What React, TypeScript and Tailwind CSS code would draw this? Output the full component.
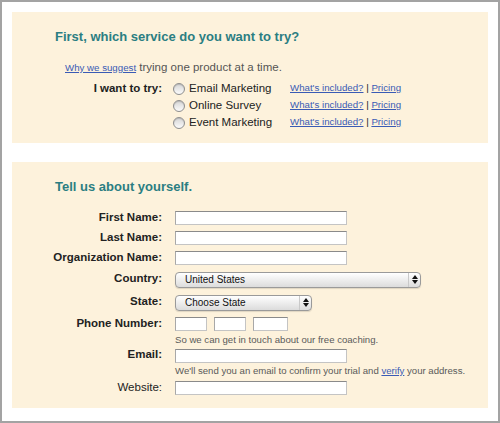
const font = { fontFamily: '"Liberation Sans", Arial, sans-serif' }

function Radio({ label }: { label: string }) {
  return (
    <div className="flex items-center w-[117px]">
      <span className="w-[12px] h-[12px] rounded-full border border-[#8e8e8e] bg-gradient-to-b from-[#d6d6d6] to-[#fbfbfb] shadow-[inset_0_1px_1px_rgba(0,0,0,0.15)]" />
      <span className="ml-[4px] text-[11.5px] text-[#222]">{label}</span>
    </div>
  )
}

function ServiceRow({ label, service }: { label?: string; service: string }) {
  return (
    <div className="flex items-center h-[17px]">
      <div className="w-[150px] text-right text-[11.5px] font-bold text-[#222]">{label}</div>
      <div className="ml-[11px]">
        <Radio label={service} />
      </div>
      <div className="text-[9.7px] text-[#222]">
        <a className="text-[#3a5bb5] underline">What's included?</a> |{" "}
        <a className="text-[#3a5bb5] underline">Pricing</a>
      </div>
    </div>
  )
}

function Field({
  label,
  bold = true,
  h = 20,
  children,
}: {
  label: string
  bold?: boolean
  h?: number
  children: React.ReactNode
}) {
  return (
    <div className="flex items-center" style={{ height: h }}>
      <div
        className={
          "w-[150px] text-right text-[11.5px] leading-[14px] pb-[3px] text-[#222] " +
          (bold ? "font-bold" : "")
        }
      >
        {label}
      </div>
      <div className="ml-[13px] flex items-center">{children}</div>
    </div>
  )
}

function TextInput({ w = 172 }: { w?: number }) {
  return (
    <div
      className="h-[14px] bg-white border border-[#c4c4c4] border-t-[#8a8a8a] border-l-[#a8a8a8]"
      style={{ width: w }}
    />
  )
}

function Select({ w, value }: { w: number; value: string }) {
  return (
    <div
      className="h-[16px] flex items-center rounded-[4px] border border-[#9a9a9a] bg-gradient-to-b from-[#ffffff] to-[#dcdcdc] shadow-[0_1px_1px_rgba(0,0,0,0.12)]"
      style={{ width: w }}
    >
      <span className="flex-1 pl-[9px] text-[10px] text-[#111] leading-[14px]">{value}</span>
      <span className="w-[12px] h-full border-l border-[#c9c9c9] flex flex-col items-center justify-center gap-[1px]">
        <svg width="6" height="4" viewBox="0 0 6 4">
          <path d="M3 0 L6 4 L0 4 Z" fill="#111" />
        </svg>
        <svg width="6" height="4" viewBox="0 0 6 4">
          <path d="M0 0 L6 0 L3 4 Z" fill="#111" />
        </svg>
      </span>
    </div>
  )
}

function Note({ children }: { children: React.ReactNode }) {
  return (
    <div className="h-[12px] pl-[163px] text-[9.6px] leading-[12px] text-[#5a5a5a]">{children}</div>
  )
}

export default function App() {
  return (
    <div className="w-[500px] h-[423px] bg-white border-2 border-[#a3a3a3] p-[10px]" style={font}>

      {/* Service */}

      <section className="bg-[#fdf2dc] pt-[17px] pb-[12px]">
        <h2 className="ml-[43px] text-[13px] leading-[16px] font-bold text-[#2b7e82]">
          First, which service do you want to try?
        </h2>

        <p className="mt-[14px] ml-[53px] h-[16px] leading-[16px] text-[11.5px] text-[#555]">
          <a className="text-[9.7px] text-[#3a5bb5] underline">Why we suggest</a> trying one product at a time.
        </p>

        <div className="mt-[5px]">
          <ServiceRow label="I want to try:" service="Email Marketing" />
          <ServiceRow service="Online Survey" />
          <ServiceRow service="Event Marketing" />
        </div>
      </section>

      {/* About */}

      <section className="mt-[19px] bg-[#fdf2dc] pt-[17px] pb-[10px]">
        <h2 className="ml-[43px] text-[13px] leading-[16px] font-bold text-[#2b7e82]">
          Tell us about yourself.
        </h2>

        <div className="mt-[13px]">
          <Field label="First Name:">
            <TextInput />
          </Field>
          <Field label="Last Name:">
            <TextInput />
          </Field>
          <Field label="Organization Name:">
            <TextInput />
          </Field>
          <Field label="Country:" h={23}>
            <Select w={246} value="United States" />
          </Field>
          <Field label="State:" h={23}>
            <Select w={137} value="Choose State" />
          </Field>
          <Field label="Phone Number:">
            <div className="flex gap-[7px]">
              <TextInput w={32} />
              <TextInput w={32} />
              <TextInput w={35} />
            </div>
          </Field>
          <Note>So we can get in touch about our free coaching.</Note>
          <Field label="Email:" h={19}>
            <TextInput />
          </Field>
          <Note>
            We'll send you an email to confirm your trial and{" "}
            <a className="text-[#3a5bb5] underline">verify</a> your address.
          </Note>
          <div className="mt-[1px]">
            <Field label="Website:" bold={false}>
              <TextInput />
            </Field>
          </div>
        </div>
      </section>

    </div>
  )
}
